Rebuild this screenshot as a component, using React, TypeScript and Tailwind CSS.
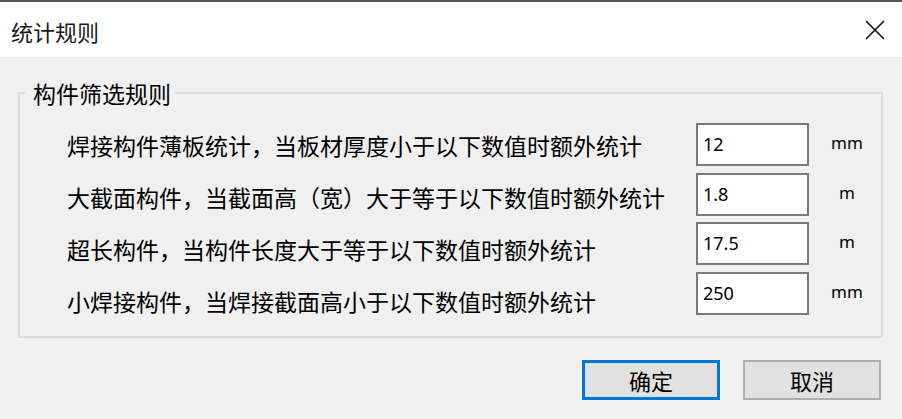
const cjk = "font-['Noto_Sans_CJK_SC','Noto_Sans',sans-serif]";

const rules = [
  { label: "焊接构件薄板统计，当板材厚度小于以下数值时额外统计", value: "12", unit: "mm" },
  { label: "大截面构件，当截面高（宽）大于等于以下数值时额外统计", value: "1.8", unit: "m" },
  { label: "超长构件，当构件长度大于等于以下数值时额外统计", value: "17.5", unit: "m" },
  { label: "小焊接构件，当焊接截面高小于以下数值时额外统计", value: "250", unit: "mm" },
];

export default function App() {
  return (
    <div className={`w-[902px] h-[419px] overflow-hidden bg-[#f0f0f0] flex flex-col text-black ${cjk}`}>
      <div className="h-[2px] bg-[#575757]" />
      <div className="h-[55px] bg-white flex items-center justify-between pl-[11px] pr-[17px]">
        <span className="text-[22px] leading-none pt-[3px] text-[#1a1a1a]">统计规则</span>
        <svg width="20" height="20" viewBox="0 0 20 20" fill="none" stroke="#111" strokeWidth="1.6">
          <path d="M1 1 L19 19 M19 1 L1 19" />
        </svg>
      </div>

      <div className="flex flex-col pl-[18px] pr-[19px]">
        <fieldset className="mt-[23px] h-[258px] border-2 border-[#dcdcdc] p-0 m-0">
          <legend className="ml-[5px] pl-[8px] pr-[4px] text-[23px] leading-[26px]">构件筛选规则</legend>
          <div className="flex">
            <div className="flex-1 flex flex-col pl-[47px] pt-[13px]">
              {rules.map((r) => (
                <div key={r.label} className="h-[52px] leading-[52px] text-[23px] whitespace-nowrap">
                  {r.label}
                </div>
              ))}
            </div>
            <div className="shrink-0 flex flex-col gap-[6.5px] pt-[17px] pr-[11px]">
              {rules.map((r) => (
                <div key={r.value} className="flex items-center h-[43px]">
                  <div className="w-[113px] h-[43px] bg-white border-2 border-[#7a7a7a] flex items-center pl-[5px] font-['Noto_Sans',sans-serif] text-[18px]">
                    {r.value}
                  </div>
                  <div className="w-[46px] ml-[15px] text-center font-['Noto_Sans',sans-serif] text-[17px] -mt-[3px]">
                    {r.unit}
                  </div>
                </div>
              ))}
            </div>
          </div>
        </fieldset>

        <div className="flex justify-end gap-[23px] mt-[22px] pr-[2px]">
          <button className="w-[138px] h-[40px] bg-[#e1e1e1] border-[3px] border-[#0078d7] text-[22px] leading-none">
            确定
          </button>
          <button className="w-[138px] h-[40px] bg-[#e1e1e1] border-2 border-[#adadad] text-[22px] leading-none">
            取消
          </button>
        </div>
      </div>
    </div>
  );
}
